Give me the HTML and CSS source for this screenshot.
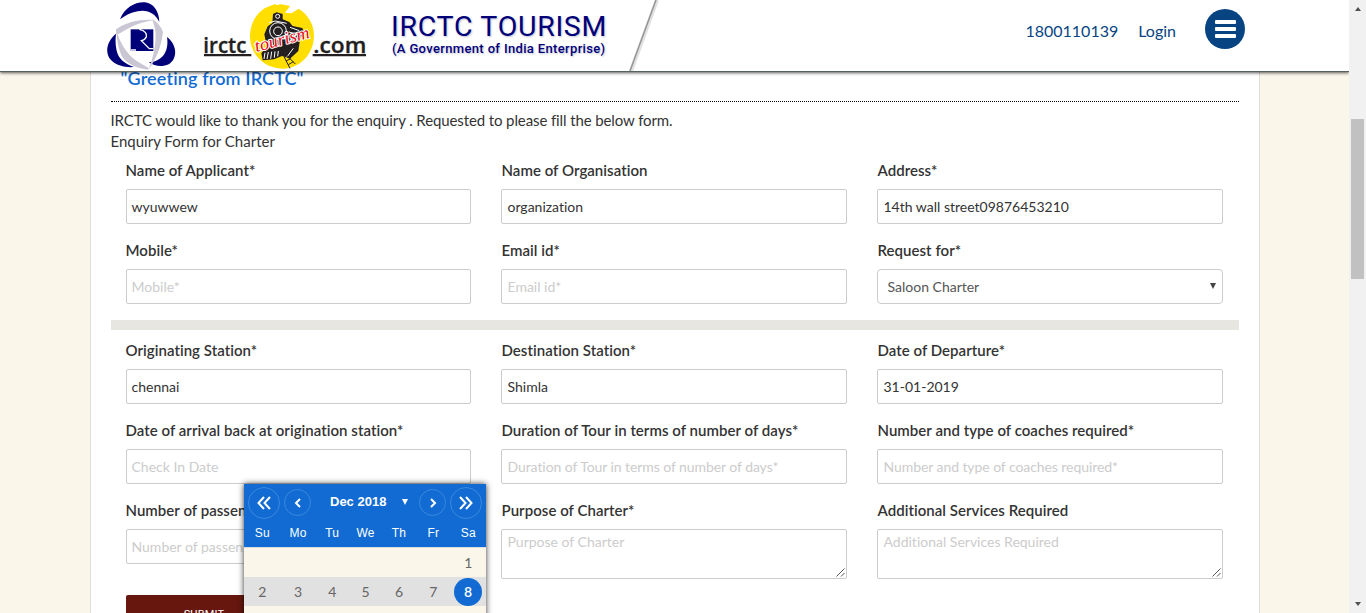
FILE: index.html
```
<!DOCTYPE html>
<html lang="en">
<head>
<meta charset="utf-8">
<title>IRCTC Tourism</title>
<link rel="stylesheet" href="styles.css">
</head>
<body>
<div class="window">
  <div class="page">
    <header class="header">
      <svg class="logo" viewBox="45 0 795 213" width="265" height="71">
        <g fill="#000078">
          <path d="M90 58C104 22 136 5 165 7C191 10 207 34 208 66C196 40 172 28 143 34C122 38 105 47 90 58Z"/>
          <path d="M78 101C48 125 43 164 66 183C82 197 105 203 132 201C104 191 85 176 80 152C76 136 76 118 78 101Z"/>
          <path d="M231 111C262 135 264 176 236 193C217 202 193 199 176 187C204 185 222 171 229 149C233 136 233 123 231 111Z"/>
        </g>
        <g fill="#cbc6d4">
          <path d="M78 88C110 66 150 57 192 60C158 65 122 78 90 100L79 104Z"/>
          <path d="M187 58C200 66 214 80 219 96C214 140 198 178 176 209C192 165 201 120 195 86Z"/>
          <path d="M80 92C88 125 110 162 140 183L176 204L174 209C142 206 118 194 102 178C88 160 80 124 80 92Z"/>
        </g>
        <path fill="#000078" d="M122 88H190V153H122Z"/>
        <path fill="none" stroke="#fff" stroke-width="4" d="M148 88C164 92 171 101 169 110Q166 119 154 122L178 146H190M122 150H138"/>
        <text class="logo-word" x="340" y="158" textLength="129" lengthAdjust="spacingAndGlyphs">irctc</text>
        <text class="logo-word" x="670" y="158" textLength="159" lengthAdjust="spacingAndGlyphs">.com</text>
        <path fill="#231f20" d="M342 162H484V169H342ZM668 162H828V169H668Z"/>
        <path fill="#ffde00" d="M540 18L556 12L574 30L584 38L604 40L626 26C655 44 673 75 672 109C671 164 627 207 578 206C523 206 481 164 480 111C480 65 505 29 540 18Z"/>
        <path fill="#ffde00" d="M540 18L574 13L600 18L584 40L560 34Z"/>
        <path fill="#231f20" d="M549 42L560 37L578 42V58L598 66L608 78L637 84L642 96L630 118L625 153L600 176L576 168L552 178L518 181L514 160L530 140L523 103L533 79L547 69Z"/>
        <g fill="none" stroke="#fff" stroke-width="3">
          <circle cx="563" cy="49" r="6"/>
          <circle cx="564" cy="93" r="25"/>
          <circle cx="564" cy="94" r="13"/>
          <path d="M537 68L556 63L590 70M600 82L628 92M597 96L624 104M525 158L522 177M535 156L531 177M545 155L542 176M555 154L553 173M565 153L563 169M610 145L590 172"/>
        </g>
        <path fill="none" stroke="#231f20" stroke-width="3" d="M582 170L600 205M590 166L616 192M588 183L602 176M595 194L610 185"/>
        <text class="logo-script" x="499" y="156" textLength="168" lengthAdjust="spacingAndGlyphs" transform="rotate(-15 499 156)">tourism</text>
      </svg>
      <div class="brand">
        <div class="brand-name">IRCTC TOURISM</div>
        <div class="brand-sub">(A Government of India Enterprise)</div>
      </div>
      <svg class="slant" viewBox="0 0 32 71" width="32" height="71"><path d="M28 0L2 71" stroke="#aaa" stroke-width="4" opacity=".35"/><path d="M27 0L1 71" stroke="#959595" stroke-width="1.500"/></svg>
      <nav class="nav">
        <span class="phone">1800110139</span>
        <span class="login">Login</span>
        <span class="menu"><i></i><i></i><i></i></span>
      </nav>
    </header>
    <main class="card">
      <h1 class="greeting"><span>"Greeting from IRCTC"</span></h1>
      <div class="intro"><span class="intro-a">IRCTC would like to thank you for the enquiry . Requested to please fill the below form.</span><br><span>Enquiry Form for Charter</span></div>
      <div class="grid">
        <div class="field"><label>Name of Applicant*</label><div class="input">wyuwwew</div></div>
        <div class="field"><label>Name of Organisation</label><div class="input">organization</div></div>
        <div class="field"><label>Address*</label><div class="input">14th wall street09876453210</div></div>
        <div class="field"><label>Mobile*</label><div class="input hint">Mobile*</div></div>
        <div class="field"><label>Email id*</label><div class="input hint">Email id*</div></div>
        <div class="field"><label>Request for*</label><div class="input select">Saloon Charter<i class="caret"></i></div></div>
      </div>
      <div class="divider"></div>
      <div class="grid">
        <div class="field"><label>Originating Station*</label><div class="input">chennai</div></div>
        <div class="field"><label>Destination Station*</label><div class="input">Shimla</div></div>
        <div class="field"><label>Date of Departure*</label><div class="input">31-01-2019</div></div>
        <div class="field"><label>Date of arrival back at origination station*</label><div class="input hint">Check In Date</div></div>
        <div class="field"><label>Duration of Tour in terms of number of days*</label><div class="input hint tight">Duration of Tour in terms of number of days*</div></div>
        <div class="field"><label>Number and type of coaches required*</label><div class="input hint tight">Number and type of coaches required*</div></div>
        <div class="field"><label>Number of passengers*</label><div class="input hint">Number of passengers*</div></div>
        <div class="field"><label>Purpose of Charter*</label><div class="input hint area">Purpose of Charter<svg class="grip" viewBox="0 0 9 9" width="9" height="9"><path d="M.5 8.5L8.5.5M5 8.5L8.5 5"/></svg></div></div>
        <div class="field"><label>Additional Services Required</label><div class="input hint area">Additional Services Required<svg class="grip" viewBox="0 0 9 9" width="9" height="9"><path d="M.5 8.5L8.5.5M5 8.5L8.5 5"/></svg></div></div>
      </div>
      <button class="submit">SUBMIT</button>
    </main>
    <div class="calendar">
      <div class="cal-head">
        <div class="cal-nav">
          <span class="round big"><svg viewBox="0 0 14 14" width="14" height="14"><path d="M7 1L1.5 7L7 13M13 1L7.500 7L13 13"/></svg></span>
          <span class="round"><svg viewBox="0 0 8 10" width="8" height="10"><path d="M6 1L2 5L6 9"/></svg></span>
          <span class="month">Dec 2018</span><i class="month-caret"></i>
          <span class="round"><svg viewBox="0 0 8 10" width="8" height="10"><path d="M2 1L6 5L2 9"/></svg></span>
          <span class="round big"><svg viewBox="0 0 14 14" width="14" height="14"><path d="M1 1L6.500 7L1 13M7 1L12.500 7L7 13"/></svg></span>
        </div>
        <div class="week names"><span>Su</span><span>Mo</span><span>Tu</span><span>We</span><span>Th</span><span>Fr</span><span>Sa</span></div>
      </div>
      <div class="week"><span></span><span></span><span></span><span></span><span></span><span></span><span>1</span></div>
      <div class="week current"><span>2</span><span>3</span><span>4</span><span>5</span><span>6</span><span>7</span><span><b class="today">8</b></span></div>
      <div class="week"></div>
    </div>
  </div>
  <div class="scrollbar"><i class="up"></i><div class="thumb"></div><i class="down"></i></div>
</div>
</body>
</html>
```
FILE: styles.css
```
* { box-sizing: border-box; }
body { margin: 0; font-family: Lato, sans-serif; font-variant-ligatures: none; color: #333; overflow: hidden; }
.window { display: flex; height: 613px; overflow: hidden; }
.page { position: relative; width: 1349px; height: 613px; overflow: hidden; background: #faf6ea; }

.header { position: relative; z-index: 2; display: flex; height: 72px; padding-left: 105px; background: #fff; border-bottom: 1px solid #59625a; box-shadow: 0 1px 3px rgba(0,0,0,.65); }
.logo { flex: none; }
.logo-word { font: 600 62px "Open Sans", sans-serif; fill: #231f20; stroke: #231f20; stroke-width: 1px; }
.logo-script { font: italic 400 52px "Liberation Serif", serif; fill: #e30613; stroke: #fff; stroke-width: 6px; paint-order: stroke; stroke-linejoin: round; }
.brand { flex: none; width: 259px; padding: 10px 0 0 21px; font-family: Roboto, sans-serif; color: #000078; white-space: nowrap; text-shadow: 1px 1px 2px rgba(0,0,80,.25); }
.brand-name { font-size: 28.500px; line-height: 33px; letter-spacing: .7px; }
.brand-sub { padding-left: 1px; font-size: 13px; line-height: 12px; font-weight: 500; letter-spacing: .35px; }
.slant { flex: none; }
.nav { display: flex; margin-left: auto; padding: 9px 104px 0 0; color: #084482; font-size: 16px; line-height: 43px; }
.phone { margin-right: 20px; }
.login { margin-right: 29px; }
.menu { display: flex; flex-direction: column; align-items: center; justify-content: center; gap: 3px; width: 40px; height: 40px; border-radius: 50%; background: #084482; }
.menu i { width: 21px; height: 4px; background: #fff; border-radius: 1px; }

.card { width: 1170px; height: 541px; margin-left: 89.500px; padding: 0 20px; background: #fff; border: 1px solid #ddd; border-width: 0 1px; }
.greeting { margin: 0; height: 30px; padding-left: 10px; border-bottom: 1px dotted #000; color: #116bd2; font-size: 18px; line-height: 13px; font-weight: 600; letter-spacing: .14px; }
.intro { height: 58px; padding-top: 8px; font-size: 15px; line-height: 21px; white-space: nowrap; }
.intro-a { letter-spacing: -.11px; }
.grid { display: grid; grid-template-columns: repeat(3, 376px); grid-auto-rows: 80px; }
.field { padding: 0 15px; }
.field label { display: block; height: 29px; font-size: 15px; line-height: 21px; font-weight: 600; letter-spacing: .04px; white-space: nowrap; }
.input { position: relative; height: 35px; margin: 0 .6px 0 -.6px; padding: 0 5px 0 5.600px; border: 1px solid #ccc; border-radius: 2px; font-size: 14px; line-height: 34px; white-space: nowrap; overflow: hidden; }
.field:nth-child(3n+1) .input { margin: 0 1px 0 0; padding-left: 5px; }
.hint { color: #ccc; }
.tight { letter-spacing: -.07px; }
.input.select { padding-left: 9.600px; border-radius: 4px; color: #555; }
.area { height: 50px; line-height: 24px; }
.caret { position: absolute; right: 6px; top: 13px; border: 3px solid transparent; border-top: 6px solid #444; border-bottom: 0; }
.grip { position: absolute; right: 1px; bottom: 1px; fill: none; stroke: #555; stroke-width: 1; }
.divider { height: 10px; margin-bottom: 10px; background: #e8e6e1; }
.submit { display: block; width: 157px; height: 40px; margin: 15px 0 0 15px; padding: 0; border: 0; border-radius: 2px; background: #67170d; color: #fff; font: 11px/38px Roboto, sans-serif; letter-spacing: .2px; }

.calendar { position: absolute; z-index: 1; left: 244px; top: 484px; width: 242px; height: 150px; background: #faf6ea; box-shadow: 0 0 6px rgba(0,0,0,.8); color: #666; font-size: 14px; }
.cal-head { height: 64px; background: #116bd2; border-bottom: 1px solid #ddd; color: #fff; }
.cal-nav { display: flex; align-items: center; height: 35px; padding: 2px 4px 0; }
.round { display: flex; align-items: center; justify-content: center; flex: none; width: 27px; height: 27px; border: 1px solid #3c88de; border-radius: 50%; }
.big { width: 32px; height: 32px; }
.big:first-child { margin-right: 4px; }
.big:last-child { margin-left: 4px; }
.round svg { fill: none; stroke: #fff; stroke-width: 2; }
.month { width: 57px; margin-left: 19px; padding-bottom: 3px; font: 700 13px "Liberation Sans", sans-serif; white-space: nowrap; }
.month-caret { margin: -2px 11px 0 15px; border: 3px solid transparent; border-top: 6px solid #fff; border-bottom: 0; }
.week { display: grid; grid-template-columns: 36.500px 35px 33.500px 33px 34px 34.500px 35.500px; height: 29px; line-height: 30px; text-align: center; }
.names { font: 12px/29px "Liberation Sans", sans-serif; letter-spacing: .2px; }
.current { background: #e1e1e1; }
.today { display: block; width: 28px; height: 28px; margin: 1px auto 0 3.500px; border-radius: 50%; background: #116bd2; color: #fff; line-height: 28px; font-weight: 600; }

.scrollbar { display: flex; flex-direction: column; align-items: center; width: 17px; background: #f1f1f1; }
.up { margin-top: 7px; border: 3.500px solid transparent; border-bottom: 4px solid #505050; border-top: 0; }
.thumb { width: 13px; height: 160px; margin-top: 108px; background: #c1c1c1; }
.down { margin: auto 0 7px; border: 3.500px solid transparent; border-top: 4px solid #505050; border-bottom: 0; }
```
